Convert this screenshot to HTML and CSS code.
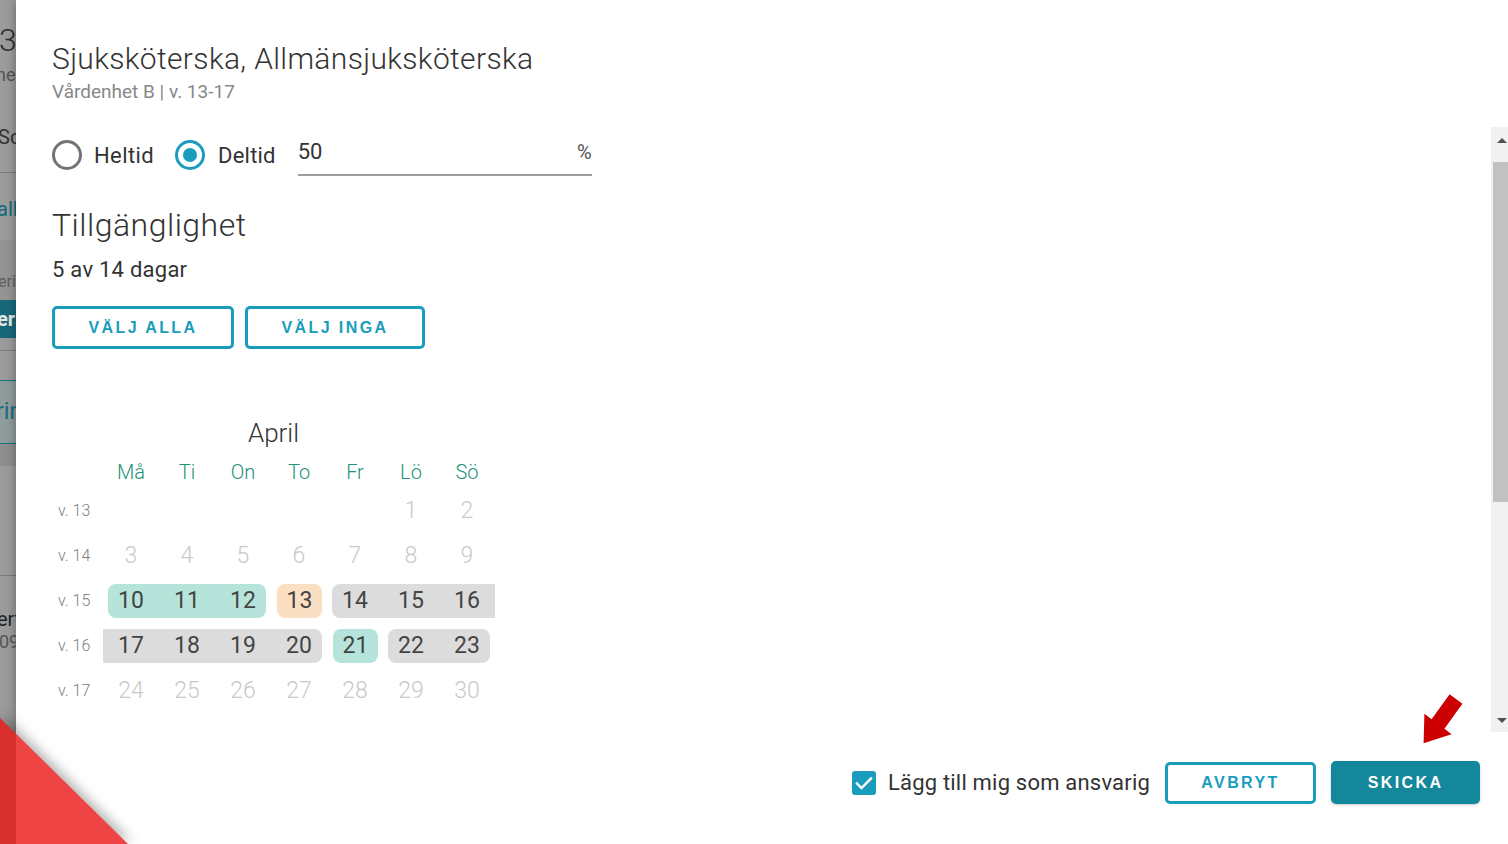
FILE: index.html
```html
<!DOCTYPE html>
<html lang="sv">
<head>
<meta charset="utf-8">
<title>Tillgänglighet</title>
<link rel="stylesheet" href="styles.css">
</head>
<body>
<div class="app">
  <aside class="bgpage">
    <div class="bp-gap g20"></div>
    <div class="bp-row big"><span>3</span></div>
    <div class="bp-row sub"><span>ner</span></div>
    <div class="bp-row mid"><span>Schema</span></div>
    <div class="bp-row teal"><span>alla</span></div>
    <div class="bp-row small"><span>eringar</span></div>
    <div class="bp-row sel"><span>ersonal</span></div>
    <div class="bp-gap g12"></div>
    <div class="bp-row ruled"></div>
    <div class="bp-row tealbox"><span>ring</span></div>
    <div class="bp-row band2"></div>
    <div class="bp-gap g109"></div>
    <div class="bp-row person"><span class="p1">ert</span><span class="p2">09</span></div>
    <div class="bp-row last"></div>
  </aside>

  <main class="dialog">
    <header class="head">
      <h1 class="title">Sjuksköterska, Allmänsjuksköterska</h1>
      <p class="subtitle">Vårdenhet B | v. 13-17</p>
    </header>

    <div class="scope">
      <label class="radio">
        <span class="ring"></span>
        <span class="rlabel">Heltid</span>
      </label>
      <label class="radio on">
        <span class="ring"><span class="dot"></span></span>
        <span class="rlabel">Deltid</span>
      </label>
      <div class="field">
        <span class="fval">50</span>
        <span class="fsuffix">%</span>
      </div>
    </div>

    <h2 class="section">Tillgänglighet</h2>
    <p class="count">5 av 14 dagar</p>

    <div class="actions">
      <button class="obtn w1">VÄLJ ALLA</button>
      <button class="obtn w2">VÄLJ INGA</button>
    </div>

    <section class="cal">
      <div class="month">April</div>
      <div class="grid">
        <div class="wk"></div>
        <div class="dh">Må</div><div class="dh">Ti</div><div class="dh">On</div><div class="dh">To</div><div class="dh">Fr</div><div class="dh">Lö</div><div class="dh">Sö</div>

        <div class="wk wl">v. 13</div>
        <div class="d"></div><div class="d"></div><div class="d"></div><div class="d"></div><div class="d"></div>
        <div class="d off"><span>1</span></div><div class="d off"><span>2</span></div>

        <div class="wk wl">v. 14</div>
        <div class="d off"><span>3</span></div><div class="d off"><span>4</span></div><div class="d off"><span>5</span></div><div class="d off"><span>6</span></div><div class="d off"><span>7</span></div><div class="d off"><span>8</span></div><div class="d off"><span>9</span></div>

        <div class="wk wl">v. 15</div>
        <div class="d on"><span class="hl green l">10</span></div>
        <div class="d on"><span class="hl green">11</span></div>
        <div class="d on"><span class="hl green r">12</span></div>
        <div class="d on"><span class="hl peach l r">13</span></div>
        <div class="d on"><span class="hl grey l">14</span></div>
        <div class="d on"><span class="hl grey">15</span></div>
        <div class="d on"><span class="hl grey">16</span></div>

        <div class="wk wl">v. 16</div>
        <div class="d on"><span class="hl grey">17</span></div>
        <div class="d on"><span class="hl grey">18</span></div>
        <div class="d on"><span class="hl grey">19</span></div>
        <div class="d on"><span class="hl grey r">20</span></div>
        <div class="d on"><span class="hl green l r">21</span></div>
        <div class="d on"><span class="hl grey l">22</span></div>
        <div class="d on"><span class="hl grey r">23</span></div>

        <div class="wk wl">v. 17</div>
        <div class="d off"><span>24</span></div><div class="d off"><span>25</span></div><div class="d off"><span>26</span></div><div class="d off"><span>27</span></div><div class="d off"><span>28</span></div><div class="d off"><span>29</span></div><div class="d off"><span>30</span></div>
      </div>
    </section>

    <footer class="foot">
      <label class="check">
        <span class="box">
          <svg viewBox="0 0 24 24" width="24" height="24"><path d="M5 12.5l4.5 4.5L19 7.5" fill="none" stroke="#fff" stroke-width="2.4" stroke-linecap="square"/></svg>
        </span>
        <span class="clabel">Lägg till mig som ansvarig</span>
      </label>
      <button class="obtn cancel">AVBRYT</button>
      <button class="fbtn">SKICKA</button>
    </footer>

    <div class="scrollbar">
      <span class="arr up"></span>
      <span class="thumb"></span>
      <span class="arr down"></span>
    </div>

    <svg class="pointer" viewBox="0 0 50 58" width="50" height="58">
      <polygon points="31.6,4.2 44.4,13.8 26.4,38.8 33.6,44.2 5.6,53.2 6.4,23.8 13.6,29.2" fill="#cc0000"/>
    </svg>
  </main>

  <div class="corner"><div class="corner-shape"></div></div>
</div>
</body>
</html>
```

FILE: styles.css
```css
* { box-sizing: border-box; }
html, body { margin: 0; padding: 0; }
body {
  width: 1508px;
  height: 844px;
  overflow: hidden;
  font-family: Roboto, "Liberation Sans", Arial, sans-serif;
  color: #333;
  background: #fff;
}
.app {
  display: flex;
  width: 1508px;
  height: 844px;
  position: relative;
}

/* dimmed background page */
.bgpage {
  width: 16px;
  flex: 0 0 16px;
  height: 844px;
  overflow: hidden;
  background: #9b9b9b;
  display: flex;
  flex-direction: column;
}
.bp-gap { flex: 0 0 auto; }
.g20 { height: 20px; }
.g12 { height: 12px; }
.g109 { height: 109px; }
.bp-row {
  flex: 0 0 auto;
  display: flex;
  justify-content: flex-start;
  align-items: flex-start;
  white-space: nowrap;
  overflow: hidden;
  font-size: 20px;
  line-height: 22px;
  color: #333;
}
.bp-row span { display: block; }
.bp-row.big { height: 40px; font-size: 32px; line-height: 40px; font-weight: 300; color: #2e2e2e; }
.bp-row.big span { margin-left: -1px; }
.bp-row.sub { height: 30px; font-size: 18px; line-height: 30px; color: #555; }
.bp-row.sub span { margin-left: -4px; }
.bp-row.mid { height: 82px; padding-top: 36px; color: #333; }
.bp-row.mid span { margin-left: -2px; }
.bp-row.teal { height: 68px; padding-top: 26px; border-top: 1px solid #7d7d7d; color: #0f6b7c; line-height: 20px; }
.bp-row.teal span { margin-left: -3px; }
.bp-row.small { height: 60px; padding-top: 32px; font-size: 16px; line-height: 20px; color: #5e5e5e; background: #949494; }
.bp-row.small span { margin-left: -2px; }
.bp-row.sel { height: 38px; align-items: center; background: #17697a; color: #e6e6e6; font-weight: 700; }
.bp-row.sel span { margin-left: -3px; }
.bp-row.ruled { height: 30px; border-top: 1px solid #7d7d7d; }
.bp-row.tealbox {
  height: 64px;
  align-items: center;
  background: #8f9b9d;
  border-top: 1px solid #1a6f80;
  border-bottom: 1px solid #1a6f80;
  color: #146c7d;
  font-size: 23px;
  line-height: 26px;
}
.bp-row.tealbox span { margin-left: -4px; }
.bp-row.band2 { height: 22px; background: #8e8e8e; }
.bp-row.person {
  height: 225px;
  flex-direction: column;
  padding-top: 32px;
  border-top: 1px solid #7d7d7d;
}
.p1 { color: #222; font-size: 20px; line-height: 22px; margin-left: -3px; }
.p2 { color: #555; font-size: 18px; line-height: 24px; margin-left: -1px; }
.bp-row.last { height: 44px; border-top: 1px solid #7d7d7d; }

/* dialog */
.dialog {
  flex: 1 1 auto;
  height: 844px;
  position: relative;
  background: #fff;
  box-shadow: -2px 0 8px rgba(0, 0, 0, 0.25);
  padding: 41px 28px 40px 36px;
  display: flex;
  flex-direction: column;
  align-items: flex-start;
}
.head { display: flex; flex-direction: column; }
.title {
  margin: 0;
  font-size: 30px;
  line-height: 36px;
  font-weight: 300;
  color: #333;
  letter-spacing: 0.35px;
}
.subtitle {
  margin: 3px 0 0;
  font-size: 19px;
  line-height: 24px;
  color: #888;
}

.scope {
  margin-top: 29px;
  height: 44px;
  display: flex;
  align-items: center;
}
.radio {
  display: flex;
  align-items: center;
  margin-right: 21px;
}
.radio.on { margin-right: 22px; }
.ring {
  width: 30px;
  height: 30px;
  border-radius: 50%;
  border: 3px solid #737373;
  display: flex;
  align-items: center;
  justify-content: center;
}
.radio.on .ring { border-color: #1a9dbd; }
.dot { width: 14px; height: 14px; border-radius: 50%; background: #1a9dbd; }
.rlabel { margin-left: 12px; font-size: 22px; letter-spacing: 0.4px; color: #333; }
.radio.on .rlabel { margin-left: 13px; letter-spacing: 0.2px; }
.field {
  align-self: flex-start;
  width: 294px;
  height: 43px;
  border-bottom: 2px solid #9e9e9e;
  display: flex;
  align-items: flex-end;
  justify-content: space-between;
  padding-bottom: 9px;
  font-size: 22px;
  line-height: 26px;
  color: #333;
}
.fsuffix { font-size: 20px; color: #555; }

.section {
  margin: 30px 0 0;
  font-size: 32px;
  line-height: 36px;
  font-weight: 300;
  letter-spacing: 0.5px;
  color: #333;
}
.count {
  margin: 13px 0 0;
  font-size: 22px;
  line-height: 28px;
  letter-spacing: 0.25px;
  color: #333;
}

.actions { margin-top: 22px; display: flex; gap: 11px; }
.obtn {
  height: 43px;
  border: 3px solid #1a9dbd;
  border-radius: 5px;
  background: #fff;
  color: #1a9dbd;
  font-family: "Liberation Sans", Arial, sans-serif;
  font-weight: 700;
  font-size: 16px;
  letter-spacing: 2.4px;
  padding: 0;
  display: flex;
  align-items: center;
  justify-content: center;
}
.obtn.w1 { width: 182px; }
.obtn.w2 { width: 180px; }

.cal { margin-top: 69px; width: 443px; }
.month {
  text-align: center;
  font-size: 26px;
  line-height: 30px;
  font-weight: 300;
  color: #333;
}
.grid {
  margin-top: 8px;
  display: grid;
  grid-template-columns: 51px repeat(7, 56px);
  grid-template-rows: 32px repeat(5, 45px);
}
.dh {
  display: flex;
  align-items: center;
  justify-content: center;
  font-size: 20px;
  font-weight: 300;
  color: #21917a;
}
.wk { display: flex; align-items: center; }
.wl { font-size: 16px; color: #808080; padding-left: 6px; font-weight: 300; }
.d {
  display: flex;
  align-items: center;
  justify-content: center;
  font-size: 23px;
}
.d.off { color: #c9c9c9; font-weight: 300; }
.d.on { justify-content: stretch; }
.hl {
  flex: 1 1 auto;
  height: 34px;
  display: flex;
  align-items: center;
  justify-content: center;
  color: #444;
}
.hl.l { margin-left: 5px; padding-right: 5px; border-top-left-radius: 8px; border-bottom-left-radius: 8px; }
.hl.r { margin-right: 5px; padding-left: 5px; border-top-right-radius: 8px; border-bottom-right-radius: 8px; }
.hl.l.r { margin-left: 6px; padding: 0; }
.hl.green { background: #b6e4da; }
.hl.peach { background: #fbdfc3; }
.hl.grey { background: #dcdcdc; }

.foot {
  margin-top: auto;
  align-self: stretch;
  display: flex;
  align-items: center;
  justify-content: flex-end;
}
.check { display: flex; align-items: center; margin-right: 15px; }
.box {
  width: 24px;
  height: 24px;
  border-radius: 3px;
  background: #1a9dbd;
  display: flex;
}
.clabel { margin-left: 12px; font-size: 22px; letter-spacing: 0.2px; color: #333; }
.obtn.cancel { width: 151px; height: 42px; }
.fbtn {
  margin-left: 15px;
  width: 149px;
  height: 43px;
  border: none;
  border-radius: 5px;
  background: #15879c;
  color: #fff;
  font-family: "Liberation Sans", Arial, sans-serif;
  font-weight: 700;
  font-size: 16px;
  letter-spacing: 2.4px;
  box-shadow: 0 1px 3px rgba(0, 0, 0, 0.2);
}

.scrollbar {
  position: absolute;
  right: 0;
  top: 127px;
  width: 17px;
  height: 605px;
  background: #f1f1f1;
  display: flex;
  flex-direction: column;
  align-items: flex-end;
}
.thumb { width: 15px; height: 340px; background: #c1c1c1; margin-top: 19px; }
.arr { width: 0; height: 0; border-left: 5px solid transparent; border-right: 5px solid transparent; margin-right: 1px; }
.arr.up { border-bottom: 5px solid #505050; margin-top: 11px; }
.arr.down { border-top: 5px solid #505050; margin-top: auto; margin-bottom: 9px; }

.pointer { position: absolute; left: 1402px; top: 690px; }

.corner {
  position: absolute;
  left: 0;
  top: 718px;
  width: 128px;
  height: 126px;
  filter: drop-shadow(3px -3px 6px rgba(0, 0, 0, 0.3));
}
.corner-shape {
  width: 100%;
  height: 100%;
  clip-path: polygon(0 0, 100% 100%, 0 100%);
  background: linear-gradient(to right, #d82f2f 16px, #ef4444 16px);
}
```
